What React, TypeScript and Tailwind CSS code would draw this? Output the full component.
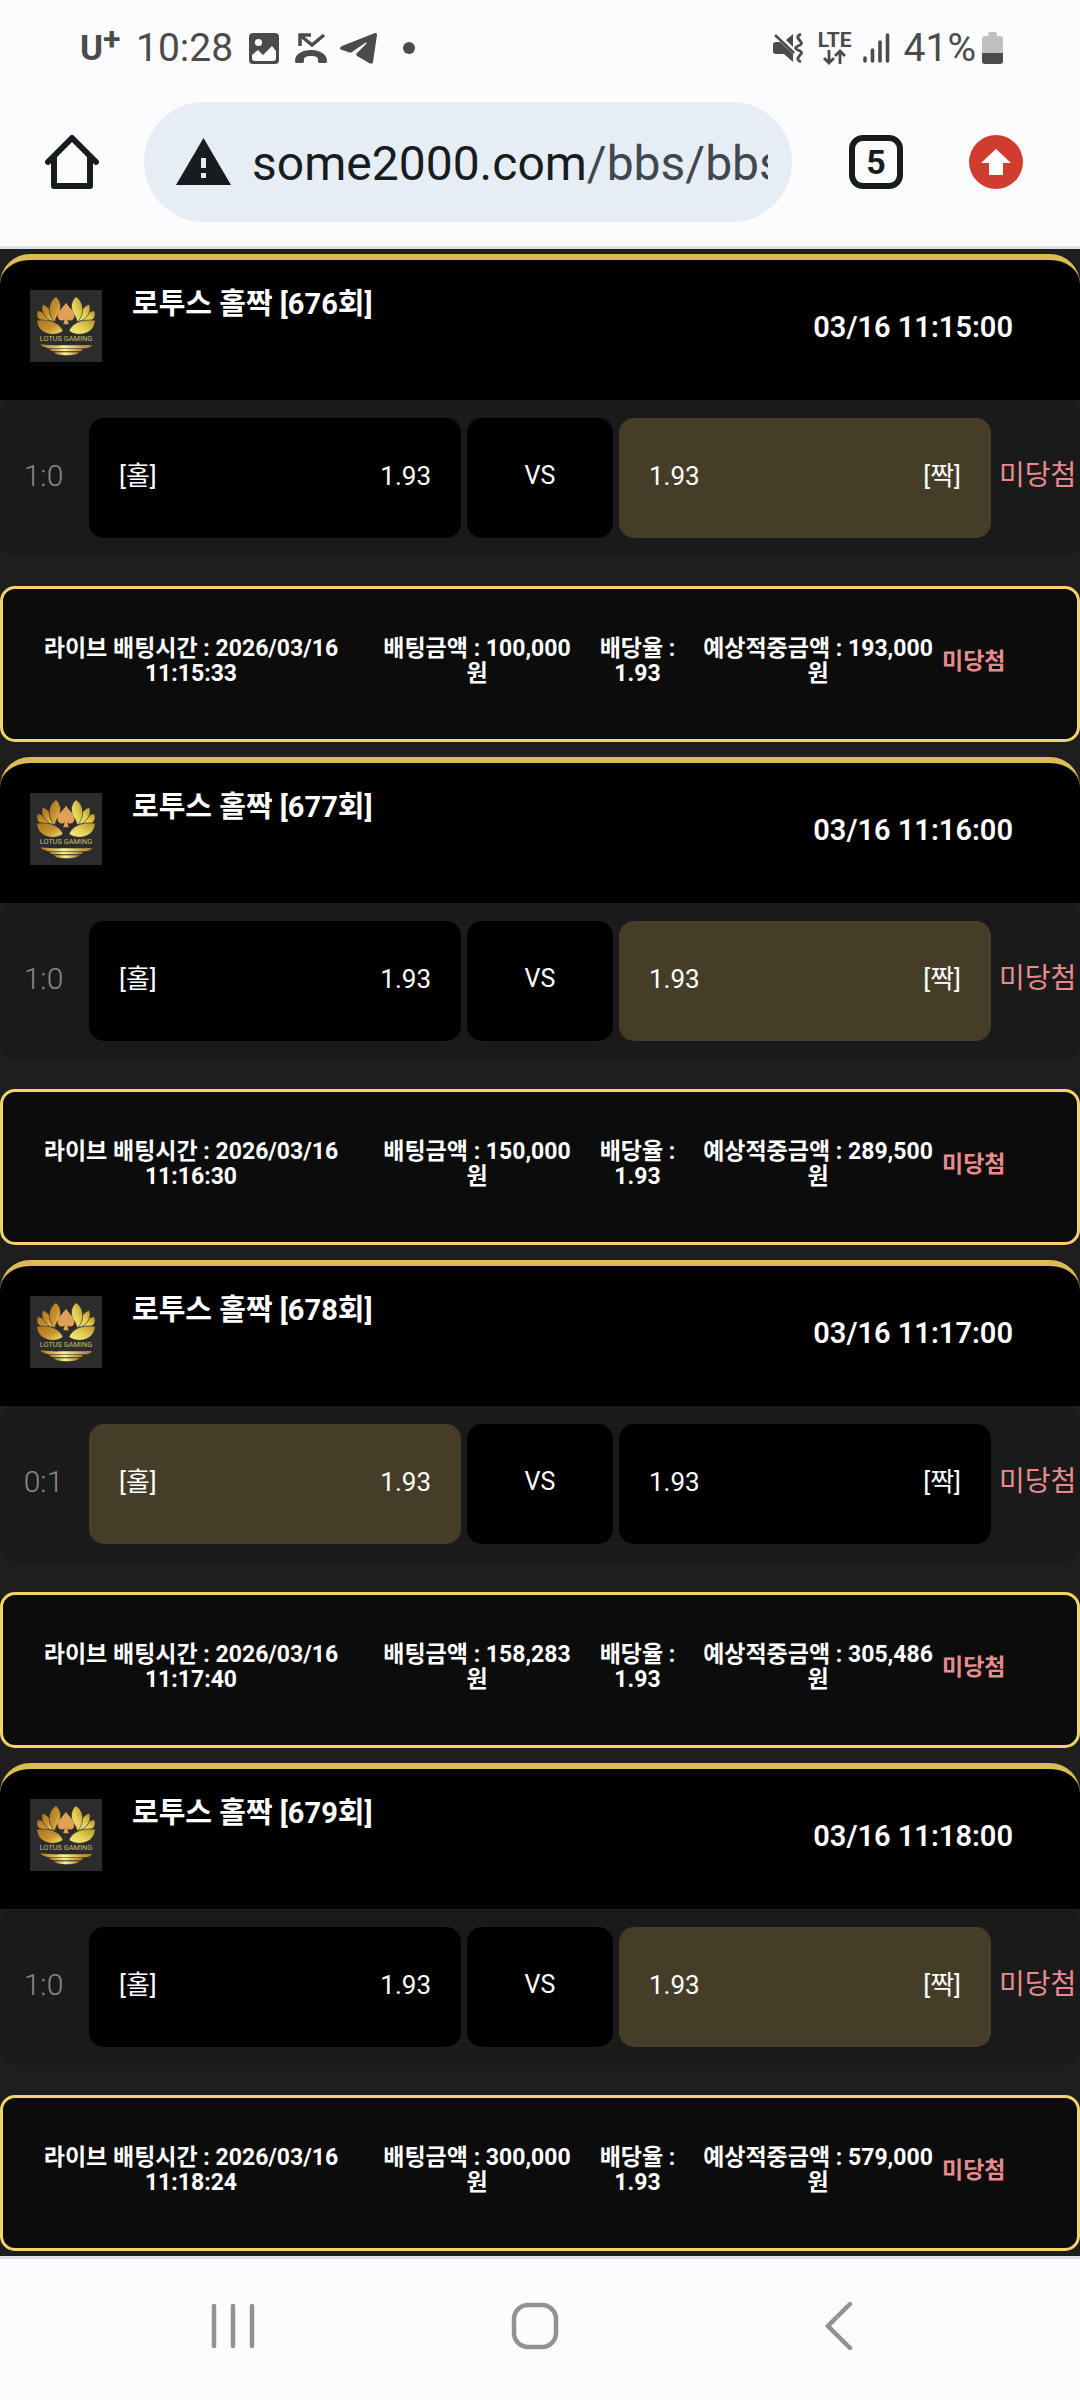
import { clsx } from 'clsx';

type Bet = {
  round: number;
  startsAt: string;
  score: string;
  pick: 'odd' | 'even';
  placedAt: string;
  amount: string;
  payout: string;
};

const ODDS = '1.93';

const bets: Bet[] = [
  { round: 676, startsAt: '03/16 11:15:00', score: '1:0', pick: 'even', placedAt: '2026/03/16 11:15:33', amount: '100,000', payout: '193,000' },
  { round: 677, startsAt: '03/16 11:16:00', score: '1:0', pick: 'even', placedAt: '2026/03/16 11:16:30', amount: '150,000', payout: '289,500' },
  { round: 678, startsAt: '03/16 11:17:00', score: '0:1', pick: 'odd', placedAt: '2026/03/16 11:17:40', amount: '158,283', payout: '305,486' },
  { round: 679, startsAt: '03/16 11:18:00', score: '1:0', pick: 'even', placedAt: '2026/03/16 11:18:24', amount: '300,000', payout: '579,000' },
];

function StatusBar() {
  return (
    <div className="flex h-24 items-center justify-between pl-20 pr-[77px] text-[39px] leading-none text-[#4b4b4b]">
      <div className="flex items-center">
        <span className="flex w-14 items-start text-[35px] font-bold">
          U<span className="-mt-2 text-[32px]">+</span>
        </span>
        <span className="w-28">10:28</span>
        <svg className="h-8 w-8" viewBox="0 0 32 32" fill="currentColor">
          <path
            fillRule="evenodd"
            d="M5 1h22a4 4 0 0 1 4 4v23a4 4 0 0 1-4 4H5a4 4 0 0 1-4-4V5a4 4 0 0 1 4-4ZM4 23v3q0 3 3 3h18q3 0 3-3v-7l-4-5-9 9-5-5Z"
          />
          <circle cx="10.500" cy="10.500" r="3.600" fill="#fcfcff" />
        </svg>
        <svg className="ml-[14px] h-8 w-[34px]" viewBox="0 0 34 32" fill="none">
          <path d="M6 14V3h11M7 4l11 9L30 3" stroke="currentColor" strokeWidth="3.500" />
          <path
            d="M1 29c0-7 7-11 16-11s16 4 16 11c0 2-1 2-2 2h-5c-2 0-2-1-2-3 0-3-2-4-7-4s-7 1-7 4c0 2 0 3-2 3H3c-1 0-2 0-2-2Z"
            fill="currentColor"
          />
        </svg>
        <svg className="ml-3 h-8 w-[37px]" viewBox="0 0 37 32" fill="currentColor">
          <path d="M35 1c1 0 2 0 2 2l-4 27c0 2-2 2-4 1l-12-7c-1-1-1-2 0-3l9-9c1-1 0-2-1-1L12 20c-1 1-2 1-4 0l-6-2c-3-1-2-3 0-4Z" />
        </svg>
        <span className="ml-[26px] h-3 w-3 rounded-full bg-current" />
      </div>
      <div className="flex items-center">
        <svg className="h-8 w-8" viewBox="0 0 32 32" fill="none" stroke="currentColor">
          <path d="M1 13q0-3 3-3h4l13 12v8l-9-8H4q-3 0-3-3Z" fill="currentColor" stroke="none" />
          <path d="M14 8l7-6v13Z" fill="currentColor" stroke="none" />
          <path d="M3 3l19 18" strokeWidth="2.500" />
          <path d="M29 2q-4 2-3 4t3 4-3 4 0 4 3 4-3 4 3 4" strokeWidth="2.800" />
        </svg>
        <span className="ml-[14px] flex flex-col items-center">
          <span className="text-[21px] font-bold leading-[17px]">LTE</span>
          <svg className="h-4 w-6" viewBox="0 0 24 16" fill="none" stroke="currentColor" strokeWidth="2.800">
            <path d="M6 1v13M1 9l5 5 5-5M17 15V2M12 7l5-5 5 5" />
          </svg>
        </span>
        <svg className="ml-[10px] h-8 w-7" viewBox="0 0 28 32" fill="none" stroke="currentColor" strokeWidth="3.600" strokeLinecap="round">
          <path d="M3 26v3M10.500 18v11M18 10v19M25.500 3v26" />
        </svg>
        <span className="ml-[14px]">41%</span>
        <svg className="ml-[6px] h-8 w-[21px]" viewBox="0 0 21 32">
          <path d="M6 2q0-2 2-2h5q2 0 2 2v2h3q3 0 3 3v14H0V7q0-3 3-3h3Z" fill="#c0c0c2" />
          <path d="M0 21h21v8q0 3-3 3H3q-3 0-3-3Z" fill="currentColor" />
        </svg>
      </div>
    </div>
  );
}

function BrowserBar() {
  return (
    <div className="flex items-center pb-6 pl-[45px] pr-[57px] pt-[6px] text-[#171c1f]">
      <button type="button" aria-label="Home" className="mr-[45px] shrink-0">
        <svg className="h-[54px] w-[54px]" viewBox="0 0 54 54" fill="none" stroke="currentColor" strokeWidth="6" strokeLinecap="round" strokeLinejoin="round">
          <path d="M3 27L27 3l24 24M9 22v29h36V22" />
        </svg>
      </button>
      <button
        type="button"
        className="flex h-[120px] min-w-0 flex-1 items-center rounded-full bg-[#e6edf4] pl-8 pr-6 text-left text-[48px]"
      >
        <svg className="h-12 w-[55px] shrink-0" viewBox="0 0 55 48">
          <path d="M27.500 0L55 47H0Z" fill="currentColor" />
          <path d="M25 20h5v10h-5ZM25 35h5v5h-5Z" fill="#e6edf4" />
        </svg>
        <span className="ml-[21px] min-w-0 overflow-hidden whitespace-nowrap pt-[3px]">
          some2000.com<span className="text-[#40484f]">/bbs/bbs</span>
        </span>
      </button>
      <button
        type="button"
        aria-label="Tabs"
        className="ml-[57px] flex h-[54px] w-[54px] shrink-0 items-center justify-center rounded-[14px] border-[6px] border-current text-[34px] font-bold leading-none"
      >
        5
      </button>
      <button type="button" aria-label="Update" className="ml-[66px] shrink-0">
        <svg className="h-[54px] w-[54px]" viewBox="0 0 54 54">
          <circle cx="27" cy="27" r="27" fill="#d03d2f" />
          <path d="M27 14l15 14h-8v12H20V28h-8Z" fill="#fff" />
        </svg>
      </button>
    </div>
  );
}

function LotusLogo() {
  return (
    <svg className="h-[72px] w-[72px] shrink-0" viewBox="30 30 216 216">
      <defs>
        <linearGradient id="petal-dark" x1="0" y1="0" x2="1" y2="1">
          <stop offset="0" stopColor="#a8741f" />
          <stop offset="0.550" stopColor="#c8922f" />
          <stop offset="1" stopColor="#f4ee7a" />
        </linearGradient>
        <linearGradient id="petal-light" x1="0" y1="1" x2="1" y2="0">
          <stop offset="0" stopColor="#f6f08a" />
          <stop offset="0.500" stopColor="#e0cf52" />
          <stop offset="1" stopColor="#b78a2c" />
        </linearGradient>
        <linearGradient id="water" x1="0" y1="0" x2="1" y2="0">
          <stop offset="0" stopColor="#a8741f" />
          <stop offset="0.450" stopColor="#f8f590" />
          <stop offset="1" stopColor="#a8741f" />
        </linearGradient>
      </defs>
      <path fill="#2c2c2c" d="M30 30h216v216H30Z" />
      <g fill="url(#petal-dark)" stroke="#2c2c2c" strokeWidth="2">
        <path d="M53 92c-6 14 0 27 12 29l34 4c-8-16-24-30-46-33Z" />
        <path d="M68 72c-8 20 4 44 32 53 2-20-8-42-32-53Z" />
        <path d="M108 50c16 14 17 34 8 50-6 9-9 17-12 26-20-18-24-58 4-76Z" />
        <path d="M50 121c3 42 52 52 79 32-8-22-36-38-79-32Z" />
      </g>
      <g fill="url(#petal-light)" stroke="#2c2c2c" strokeWidth="2">
        <path d="M223 92c6 14 0 27-12 29l-34 4c8-16 24-30 46-33Z" />
        <path d="M208 72c8 20-4 44-32 53-2-20 8-42 32-53Z" />
        <path d="M168 50c-16 14-17 34-8 50 6 9 9 17 12 26 20-18 24-58-4-76Z" />
        <path d="M226 121c-3 42-52 52-79 32 8-22 36-38 79-32Z" />
      </g>
      <path
        fill="#e2a057"
        d="M138 68c10 16 25 24 25 40 0 14-15 17-21 10l4 15h-16l4-15c-6 7-21 4-21-10 0-16 15-24 25-40Z"
      />
      <text x="138" y="184" textAnchor="middle" fontSize="22" fill="#c9c06a">
        LOTUS GAMING
      </text>
      <g fill="url(#water)">
        <path d="M62 193c24 2 40 4 60 3h70c10-2 18-1 24 0-4 8-14 9-26 9H84c-8-4-20-4-22-12Z" />
        <path d="M88 206h98c4 0 2 8-8 8h-72c-8 0-18-3-18-8Z" />
        <path d="M102 217h76c-4 6-16 9-38 9s-34-3-38-9Z" />
      </g>
    </svg>
  );
}

function Choice({ picked, left, right }: { picked: boolean; left: string; right: string }) {
  return (
    <div
      className={clsx(
        'flex items-center justify-between rounded-[15px] px-[30px] pb-1',
        picked ? 'bg-[#463d28]' : 'bg-black',
      )}
    >
      <span>{left}</span>
      <span>{right}</span>
    </div>
  );
}

function BetCard({ bet }: { bet: Bet }) {
  return (
    <article>
      <header className="flex items-start gap-[30px] rounded-t-[30px] border-t-[6px] border-[#dcbb55] bg-black px-[30px] pb-[38px] pt-[30px] text-[29px] leading-[29px]">
        <LotusLogo />
        <h2 className="flex-1 font-bold">로투스 홀짝 [{bet.round}회]</h2>
        <time className="mr-[37px] self-center pt-[2px] font-semibold">{bet.startsAt}</time>
      </header>

      <div className="grid h-[156px] grid-cols-[83fr_372fr_146fr_372fr_83fr] gap-[6px] rounded-[15px] bg-[#1a1a1a] py-[18px] text-[26px] leading-[30px]">
        <span className="self-center pb-1 pl-1 text-center text-[30px] font-light text-[#85888e]">{bet.score}</span>
        <Choice picked={bet.pick === 'odd'} left="[홀]" right={ODDS} />
        <span className="flex items-center justify-center rounded-[15px] bg-black pb-1 text-[25px]">VS</span>
        <Choice picked={bet.pick === 'even'} left={ODDS} right="[짝]" />
        <span className="self-center whitespace-nowrap pb-1 pl-[2px] text-[28px] text-[#e88b8d]">미당첨</span>
      </div>

      <div className="mt-[30px] grid h-[156px] grid-cols-[364fr_208fr_113fr_248fr_135fr] items-center rounded-[15px] border-[3px] border-[#f5d36b] bg-[#0c0c0c] pb-[6px] pl-[6px] text-center text-[23px] font-bold leading-[25px]">
        <p className="px-1">라이브 배팅시간 : {bet.placedAt}</p>
        <p className="px-1">배팅금액 : {bet.amount}원</p>
        <p className="px-1">배당율 : {ODDS}</p>
        <p className="px-1">예상적중금액 : {bet.payout}원</p>
        <p className="text-left text-[#e88b8d]">미당첨</p>
      </div>
    </article>
  );
}

function NavigationBar() {
  return (
    <nav className="flex justify-between border-t-[3px] border-[#dde3e7] bg-[#fcfcff] pb-[50px] pl-52 pr-[218px] pt-[43px] text-[#929294]">
      <button type="button" aria-label="Recents">
        <svg className="h-12 w-12" viewBox="0 0 48 48" fill="none" stroke="currentColor" strokeWidth="4.500" strokeLinecap="round">
          <path d="M6 4v40M25 4v40M44 4v40" />
        </svg>
      </button>
      <button type="button" aria-label="Home screen">
        <svg className="h-12 w-12" viewBox="0 0 48 48" fill="none" stroke="currentColor" strokeWidth="4.500">
          <rect x="3" y="3" width="42" height="42" rx="14" />
        </svg>
      </button>
      <button type="button" aria-label="Back">
        <svg className="h-12 w-12" viewBox="0 0 48 48" fill="none" stroke="currentColor" strokeWidth="4.500" strokeLinecap="round">
          <path d="M36 2L14 24l22 22" />
        </svg>
      </button>
    </nav>
  );
}

export default function App() {
  return (
    <div className="flex min-h-screen flex-col bg-[#1e1e1e] font-[Roboto,'Noto_Sans_CJK_KR',sans-serif] text-white">
      <div className="border-b-[3px] border-[#dde3e7] bg-[#fcfcff]">
        <StatusBar />
        <BrowserBar />
      </div>
      <main className="flex flex-1 flex-col gap-[15px] pb-[5px] pt-[5px]">
        {bets.map((bet) => (
          <BetCard key={bet.round} bet={bet} />
        ))}
      </main>
      <NavigationBar />
    </div>
  );
}
